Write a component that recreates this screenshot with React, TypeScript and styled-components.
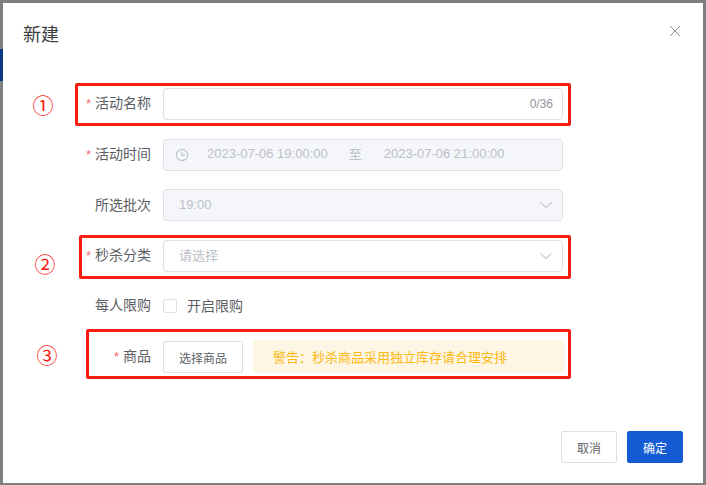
import React from "react";
import styled, { createGlobalStyle } from "styled-components";

const Global = createGlobalStyle`
  html, body { margin: 0; padding: 0; }
  #root { width: 706px; height: 485px; overflow: hidden; }
  * { box-sizing: border-box; }
`;

const Backdrop = styled.div`
  position: relative;
  width: 706px;
  height: 485px;
  background: #7f7f7f;
  padding: 3px 3px 2px 3px;
  font-family: "Liberation Sans", "Noto Sans CJK SC", sans-serif;
  overflow: hidden;
`;

const PageSliver = styled.div`
  position: absolute;
  left: 0;
  top: 49px;
  width: 3px;
  height: 32px;
  background: #0b3a82;
`;

const Dialog = styled.div`
  position: relative;
  width: 100%;
  height: 100%;
  background: #fff;
  display: flex;
  flex-direction: column;
`;

const Header = styled.div`
  display: flex;
  align-items: flex-start;
  justify-content: space-between;
  padding: 20px 22px 0 20px;
  height: 85px;
`;

const Title = styled.div`
  font-size: 18px;
  line-height: 24px;
  color: #3d3d3d;
`;

const CloseIcon = styled.svg`
  width: 12px;
  height: 12px;
  margin-top: 2px;
  stroke: #8f939c;
  stroke-width: 1;
  fill: none;
`;

const Form = styled.div`
  display: flex;
  flex-direction: column;
  gap: 18.67px;
  padding-left: 80px;
`;

const Row = styled.div`
  display: flex;
  align-items: center;
  height: 32px;
`;

const CheckRow = styled(Row)`
  margin-top: -1px;
  margin-bottom: 1px;
`;

const Label = styled.div`
  width: 68px;
  margin-right: 12px;
  padding-bottom: 1px;
  text-align: right;
  font-size: 14px;
  line-height: 20px;
  color: #5c5e63;
  white-space: nowrap;
`;

const Star = styled.span`
  color: #f56c6c;
  margin-right: 4px;
  font-size: 13px;
`;

const Field = styled.div<{ $disabled?: boolean }>`
  display: flex;
  align-items: center;
  width: 400px;
  height: 32px;
  border: 1px solid #dcdfe6;
  border-radius: 4px;
  background: ${(p) => (p.$disabled ? "#f4f6fa" : "#fff")};
  padding: 0 9px 2px 15px;
  font-size: 13px;
  color: #bcc0c8;
`;

const Spacer = styled.div`
  flex: 1;
`;

const Counter = styled.span`
  font-size: 12px;
  color: #909399;
  margin-top: 2px;
`;

const ClockIcon = styled.svg`
  width: 14px;
  height: 14px;
  margin-top: 2px;
  margin-left: -4px;
  margin-right: 18px;
  fill: none;
  stroke: #c0c4cc;
  stroke-width: 1.2;
`;

const DateText = styled.span`
  font-size: 13px;
  color: #bcc0c8;
  white-space: nowrap;
`;

const DateSep = styled.span`
  font-size: 13px;
  color: #bcc0c8;
  margin: 0 22px 0 21px;
`;

const Chevron = styled.svg`
  width: 14px;
  height: 14px;
  margin-top: 2px;
  fill: none;
  stroke: #c9ccd3;
  stroke-width: 1.2;
`;

const CheckBox = styled.span`
  width: 14px;
  height: 14px;
  border: 1px solid #dcdfe6;
  border-radius: 2px;
  background: #fff;
  margin-right: 10px;
`;

const CheckLabel = styled.span`
  font-size: 14px;
  color: #5c5e63;
  padding-bottom: 2px;
`;

const Button = styled.div<{ $primary?: boolean }>`
  display: flex;
  align-items: center;
  justify-content: center;
  height: 32px;
  border-radius: 2px;
  font-size: 12px;
  border: 1px solid ${(p) => (p.$primary ? "#155bd4" : "#dcdfe6")};
  background: ${(p) => (p.$primary ? "#155bd4" : "#fff")};
  color: ${(p) => (p.$primary ? "#fff" : "#606266")};
`;

const PickButton = styled(Button)`
  width: 80px;
  margin-right: 10px;
`;

const FooterButton = styled(Button)`
  width: 56px;
`;

const Alert = styled.div`
  display: flex;
  align-items: center;
  width: 312px;
  height: 33px;
  margin-top: -1px;
  padding-left: 20px;
  background: #fef6e4;
  border-radius: 4px;
  font-size: 13px;
  color: #fdb813;
  white-space: nowrap;
`;

const Footer = styled.div`
  margin-top: auto;
  display: flex;
  justify-content: flex-end;
  gap: 10px;
  padding: 0 20px 20px 0;
`;

const Highlight = styled.div<{ $l: number; $t: number; $w: number; $h: number }>`
  position: absolute;
  left: ${(p) => p.$l}px;
  top: ${(p) => p.$t}px;
  width: ${(p) => p.$w}px;
  height: ${(p) => p.$h}px;
  border: 3px solid #fb1c10;
  border-radius: 2px;
  pointer-events: none;
`;

const Mark = styled.div<{ $l: number; $t: number }>`
  position: absolute;
  left: ${(p) => p.$l}px;
  top: ${(p) => p.$t}px;
  width: 24px;
  height: 24px;
  color: #fb1c10;
  font-family: "Noto Sans CJK SC", sans-serif;
  font-size: 21px;
  line-height: 24px;
  text-align: center;
`;

export default function App() {
  return (
    <Backdrop>
      <Global />
      <PageSliver />
      <Dialog>
        <Header>
          <Title>新建</Title>
          <CloseIcon viewBox="0 0 12 12">
            <path d="M1 1 L11 11 M11 1 L1 11" />
          </CloseIcon>
        </Header>
        <Form>
          <Row>
            <Label><Star>*</Star>活动名称</Label>
            <Field>
              <Spacer />
              <Counter>0/36</Counter>
            </Field>
          </Row>
          <Row>
            <Label><Star>*</Star>活动时间</Label>
            <Field $disabled>
              <ClockIcon viewBox="0 0 14 14">
                <circle cx="7" cy="7" r="5.6" />
                <path d="M7 3.6 V7.4 H10" />
              </ClockIcon>
              <DateText>2023-07-06 19:00:00</DateText>
              <DateSep>至</DateSep>
              <DateText>2023-07-06 21:00:00</DateText>
            </Field>
          </Row>
          <Row>
            <Label>所选批次</Label>
            <Field $disabled>
              <span>19:00</span>
              <Spacer />
              <Chevron viewBox="0 0 14 14"><path d="M1.5 4.5 L7 9.5 L12.5 4.5" /></Chevron>
            </Field>
          </Row>
          <Row>
            <Label><Star>*</Star>秒杀分类</Label>
            <Field>
              <span>请选择</span>
              <Spacer />
              <Chevron viewBox="0 0 14 14"><path d="M1.5 4.5 L7 9.5 L12.5 4.5" /></Chevron>
            </Field>
          </Row>
          <CheckRow>
            <Label>每人限购</Label>
            <CheckBox />
            <CheckLabel>开启限购</CheckLabel>
          </CheckRow>
          <Row>
            <Label><Star>*</Star>商品</Label>
            <PickButton>选择商品</PickButton>
            <Alert>警告：秒杀商品采用独立库存请合理安排</Alert>
          </Row>
        </Form>
        <Footer>
          <FooterButton>取消</FooterButton>
          <FooterButton $primary>确定</FooterButton>
        </Footer>
      </Dialog>
      <Highlight $l={75} $t={83} $w={496} $h={43} />
      <Highlight $l={79} $t={235} $w={492} $h={44} />
      <Highlight $l={86} $t={329} $w={485} $h={50} />
      <Mark $l={31} $t={92}>①</Mark>
      <Mark $l={33} $t={251}>②</Mark>
      <Mark $l={35} $t={342}>③</Mark>
    </Backdrop>
  );
}
